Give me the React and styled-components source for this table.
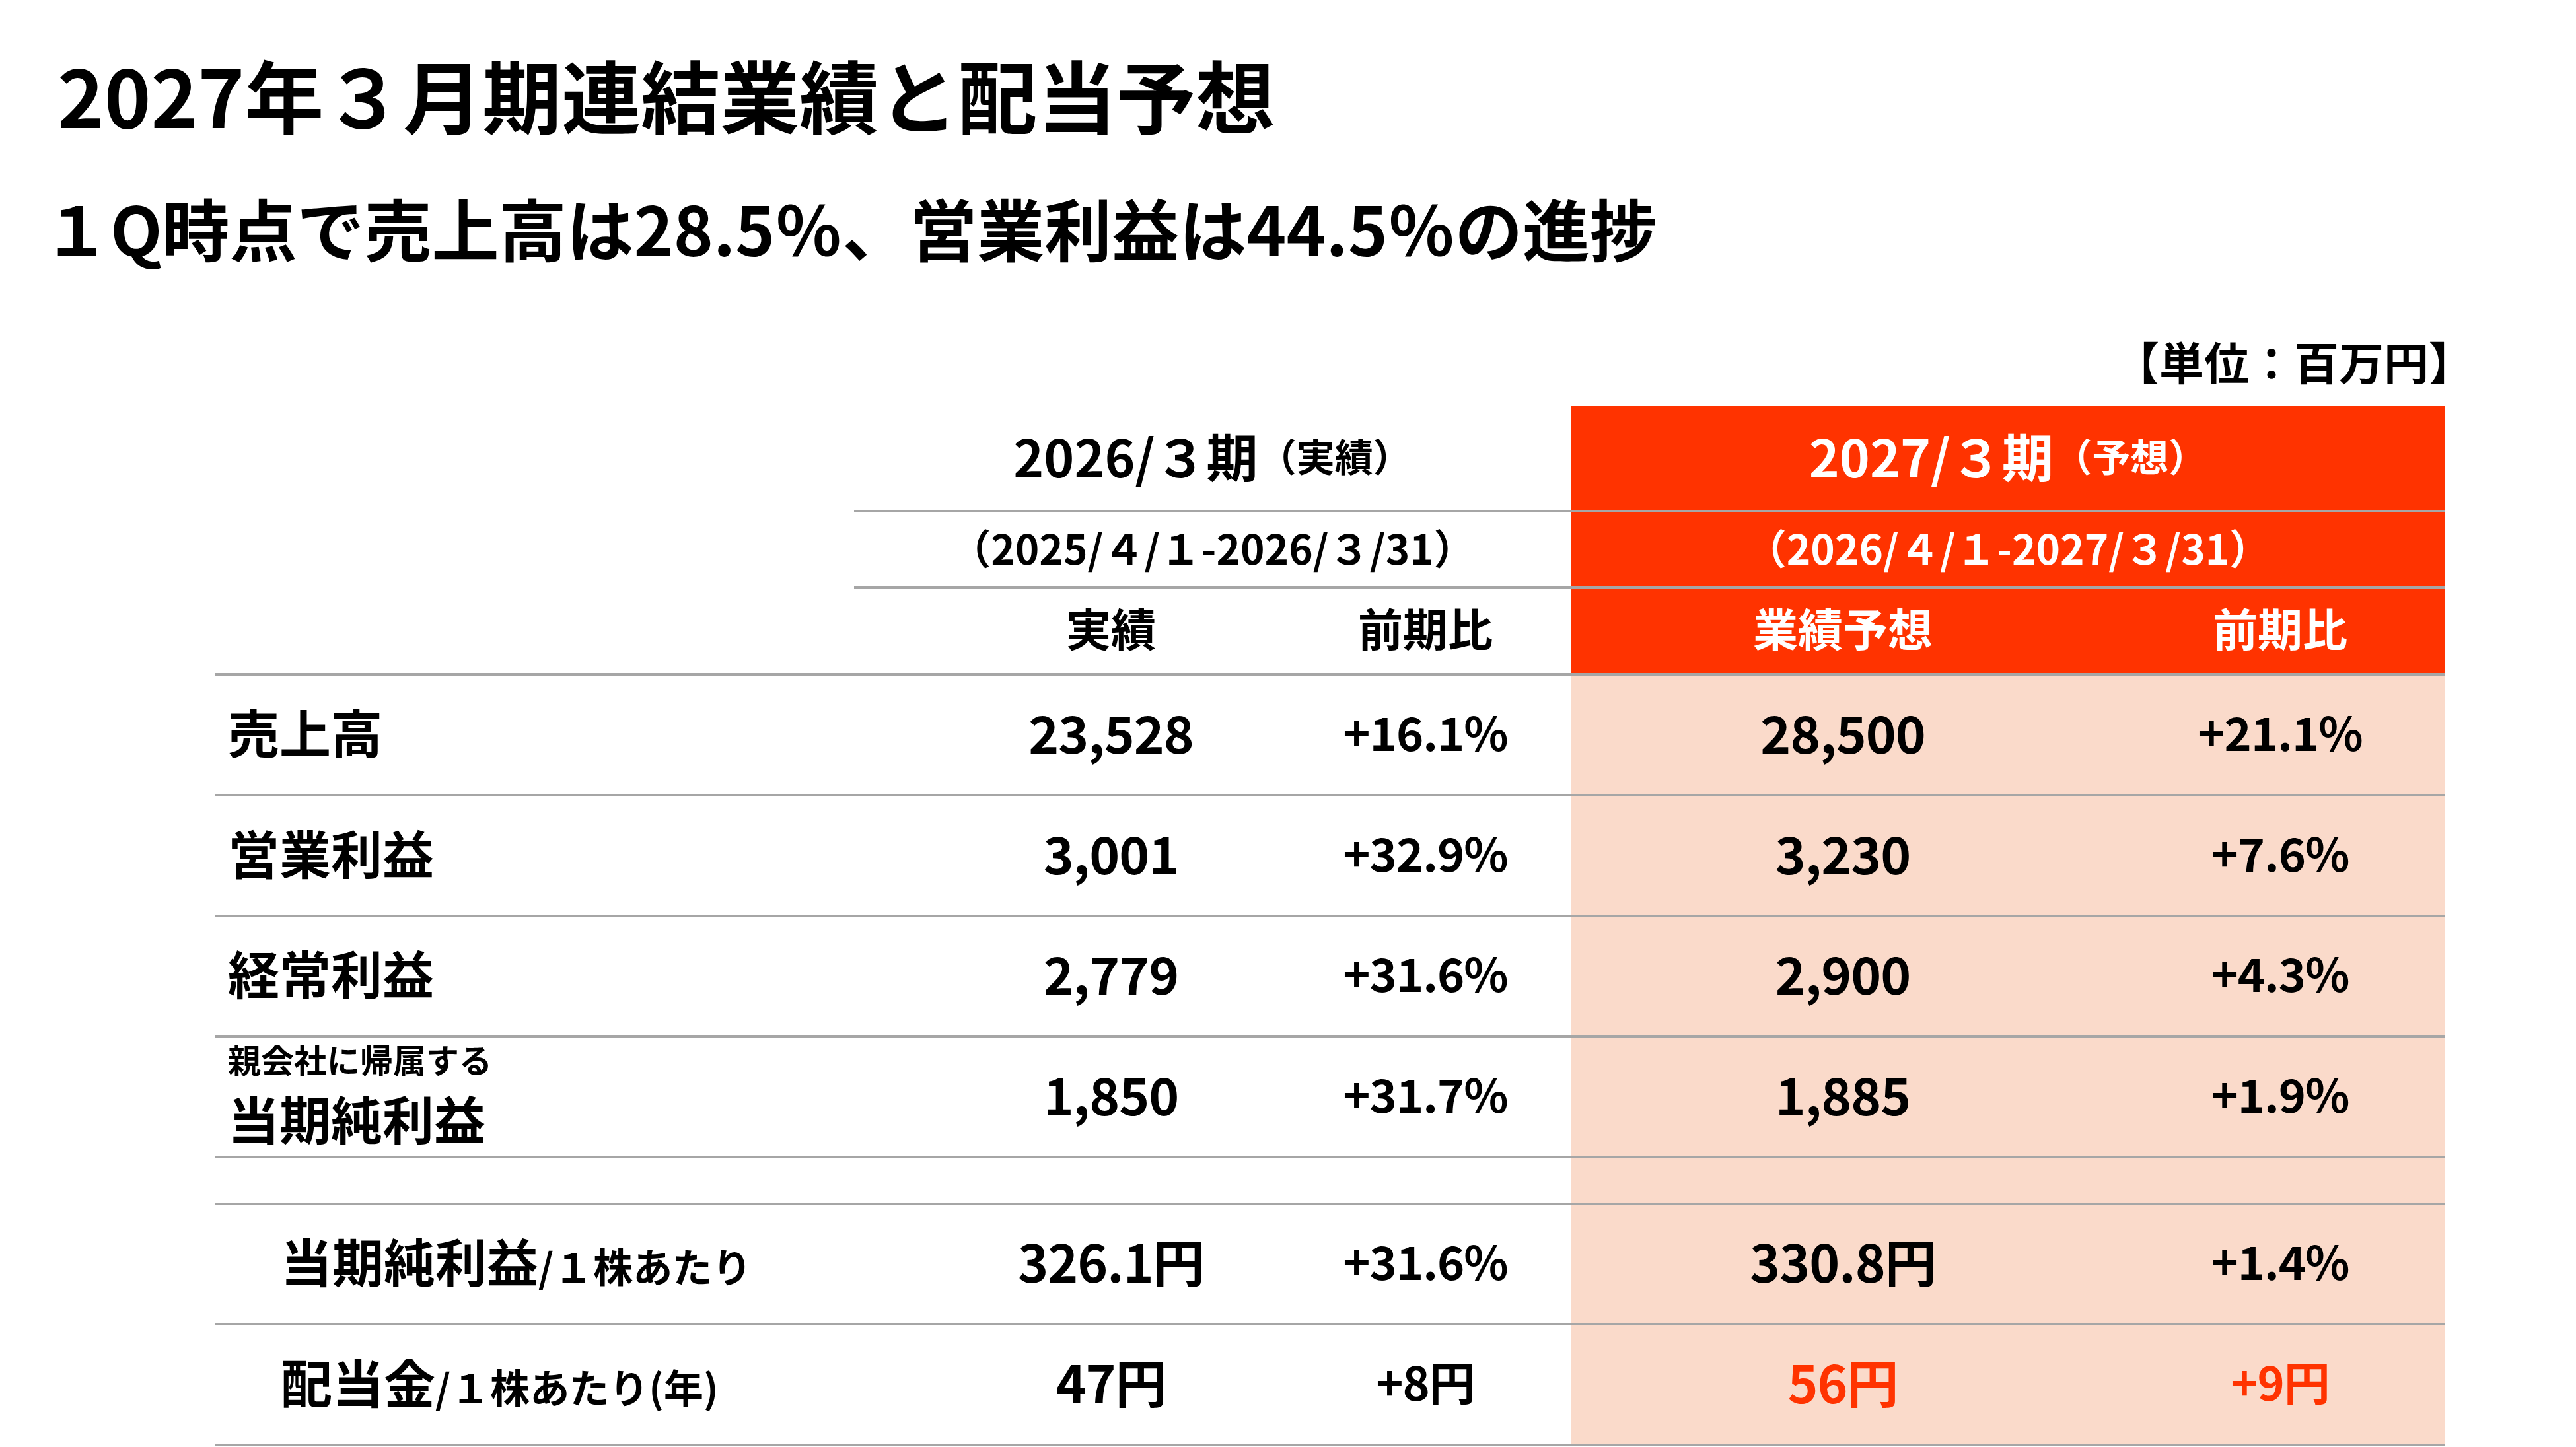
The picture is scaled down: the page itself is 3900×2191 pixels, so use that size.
import React from "react";
import styled, { createGlobalStyle } from "styled-components";

const ORANGE = "#ff3300";
const PINK = "#fadaca";
const LINE = "#a6a6a6";

const Global = createGlobalStyle`
  html, body { margin: 0; padding: 0; background: #fff; }
  body {
    width: 3900px;
    height: 2191px;
    overflow: hidden;
    font-family: "Noto Sans CJK JP", "Noto Sans", sans-serif;
    color: #000;
  }
`;

const Page = styled.div`
  width: 3900px;
  height: 2191px;
  box-sizing: border-box;
  padding-top: 82px;
  display: flex;
  flex-direction: column;
`;

const Title = styled.h1`
  margin: 0 0 0 87px;
  font-size: 120px;
  font-weight: 700;
  line-height: 1;
  white-space: nowrap;
`;

const Subtitle = styled.h2`
  margin: 91px 0 0 65px;
  font-size: 102px;
  font-weight: 700;
  line-height: 1;
  white-space: nowrap;
`;

const Unit = styled.div`
  margin-top: 118px;
  width: 3745px;
  text-align: right;
  font-size: 68px;
  font-weight: 700;
  line-height: 1;
`;

const Table = styled.div`
  margin: 33px 0 0 325px;
  width: 3377px;
  display: flex;
  flex-direction: column;
`;

const HeadRow = styled.div`
  display: grid;
  grid-template-columns: 968px 1085px 1324px;
  height: ${(p) => p.$h}px;
`;

const HeadCell = styled.div`
  box-sizing: border-box;
  display: flex;
  align-items: center;
  justify-content: center;
  padding-bottom: 8px;
  background: ${(p) => (p.$accent ? ORANGE : "transparent")};
  color: ${(p) => (p.$accent ? "#fff" : "#000")};
  border-bottom: ${(p) => (p.$line ? `4px solid ${LINE}` : "none")};
  font-weight: 700;
  line-height: 1;
  white-space: nowrap;
`;

const PeriodMain = styled.span`
  font-size: 78px;
`;

const PeriodNote = styled.span`
  font-size: 58px;
`;

const DateRange = styled.span`
  font-size: 62px;
`;

const Row = styled.div`
  display: grid;
  grid-template-columns: 1101px 532px 420px 844px 480px;
  height: ${(p) => p.$h}px;
`;

const Cell = styled.div`
  box-sizing: border-box;
  display: flex;
  flex-direction: ${(p) => (p.$stack ? "column" : "row")};
  align-items: ${(p) => (p.$stack ? "flex-start" : "center")};
  justify-content: ${(p) => (p.$stack ? "center" : p.$left ? "flex-start" : "center")};
  gap: ${(p) => (p.$stack ? "25px" : "0")};
  padding: 0 ${(p) => (p.$left ? 0 : 20)}px 12px ${(p) => p.$indent || 0}px;
  background: ${(p) => p.$bg || "transparent"};
  color: ${(p) => p.$color || "#000"};
  border-bottom: 4px solid ${LINE};
  line-height: 1;
  white-space: nowrap;
`;

const ColHead = styled.span`
  font-size: 68px;
  font-weight: 700;
`;

const Label = styled.span`
  font-size: 78px;
  font-weight: 700;
`;

const LabelNote = styled.span`
  font-size: 50px;
  font-weight: 700;
`;

const LabelSuffix = styled.span`
  font-size: 60px;
  font-weight: 700;
`;

const Value = styled.span`
  font-size: 78px;
  font-weight: 700;
  letter-spacing: -1px;
`;

const Pct = styled.span`
  font-size: 70px;
  font-weight: 700;
  letter-spacing: -1px;
`;

const rows = [
  { h: 183, label: <Label>売上高</Label>, a: "23,528", b: "+16.1%", c: "28,500", d: "+21.1%" },
  { h: 183, label: <Label>営業利益</Label>, a: "3,001", b: "+32.9%", c: "3,230", d: "+7.6%" },
  { h: 182, label: <Label>経常利益</Label>, a: "2,779", b: "+31.6%", c: "2,900", d: "+4.3%" },
  {
    h: 183,
    stack: true,
    label: (
      <>
        <LabelNote>親会社に帰属する</LabelNote>
        <Label>当期純利益</Label>
      </>
    ),
    a: "1,850",
    b: "+31.7%",
    c: "1,885",
    d: "+1.9%",
  },
  { h: 71, spacer: true },
  {
    h: 182,
    indent: 100,
    label: (
      <span>
        <Label>当期純利益</Label>
        <LabelSuffix>/１株あたり</LabelSuffix>
      </span>
    ),
    a: "326.1円",
    b: "+31.6%",
    c: "330.8円",
    d: "+1.4%",
  },
  {
    h: 183,
    indent: 100,
    label: (
      <span>
        <Label>配当金</Label>
        <LabelSuffix>/１株あたり(年)</LabelSuffix>
      </span>
    ),
    a: "47円",
    b: "+8円",
    c: "56円",
    d: "+9円",
    red: true,
  },
];

export default function App() {
  return (
    <>
      <Global />
      <Page>
        <Title>2027年３月期連結業績と配当予想</Title>
        <Subtitle>１Q時点で売上高は28.5％、営業利益は44.5％の進捗</Subtitle>
        <Unit>【単位：百万円】</Unit>
        <Table>
          <HeadRow $h={162}>
            <HeadCell />
            <HeadCell $line>
              <PeriodMain>2026/３期</PeriodMain>
              <PeriodNote>（実績）</PeriodNote>
            </HeadCell>
            <HeadCell $line $accent>
              <PeriodMain>2027/３期</PeriodMain>
              <PeriodNote>（予想）</PeriodNote>
            </HeadCell>
          </HeadRow>
          <HeadRow $h={116}>
            <HeadCell />
            <HeadCell $line>
              <DateRange>（2025/４/１-2026/３/31）</DateRange>
            </HeadCell>
            <HeadCell $line $accent>
              <DateRange>（2026/４/１-2027/３/31）</DateRange>
            </HeadCell>
          </HeadRow>
          <Row $h={131}>
            <Cell />
            <Cell>
              <ColHead>実績</ColHead>
            </Cell>
            <Cell>
              <ColHead>前期比</ColHead>
            </Cell>
            <Cell $bg={ORANGE} $color="#fff">
              <ColHead>業績予想</ColHead>
            </Cell>
            <Cell $bg={ORANGE} $color="#fff">
              <ColHead>前期比</ColHead>
            </Cell>
          </Row>
          {rows.map((r, i) =>
            r.spacer ? (
              <Row key={i} $h={r.h}>
                <Cell />
                <Cell />
                <Cell />
                <Cell $bg={PINK} />
                <Cell $bg={PINK} />
              </Row>
            ) : (
              <Row key={i} $h={r.h}>
                <Cell $left $stack={r.stack} $indent={r.indent || 20}>
                  {r.label}
                </Cell>
                <Cell>
                  <Value>{r.a}</Value>
                </Cell>
                <Cell>
                  <Pct>{r.b}</Pct>
                </Cell>
                <Cell $bg={PINK} $color={r.red ? ORANGE : "#000"}>
                  <Value>{r.c}</Value>
                </Cell>
                <Cell $bg={PINK} $color={r.red ? ORANGE : "#000"}>
                  <Pct>{r.d}</Pct>
                </Cell>
              </Row>
            )
          )}
        </Table>
      </Page>
    </>
  );
}
